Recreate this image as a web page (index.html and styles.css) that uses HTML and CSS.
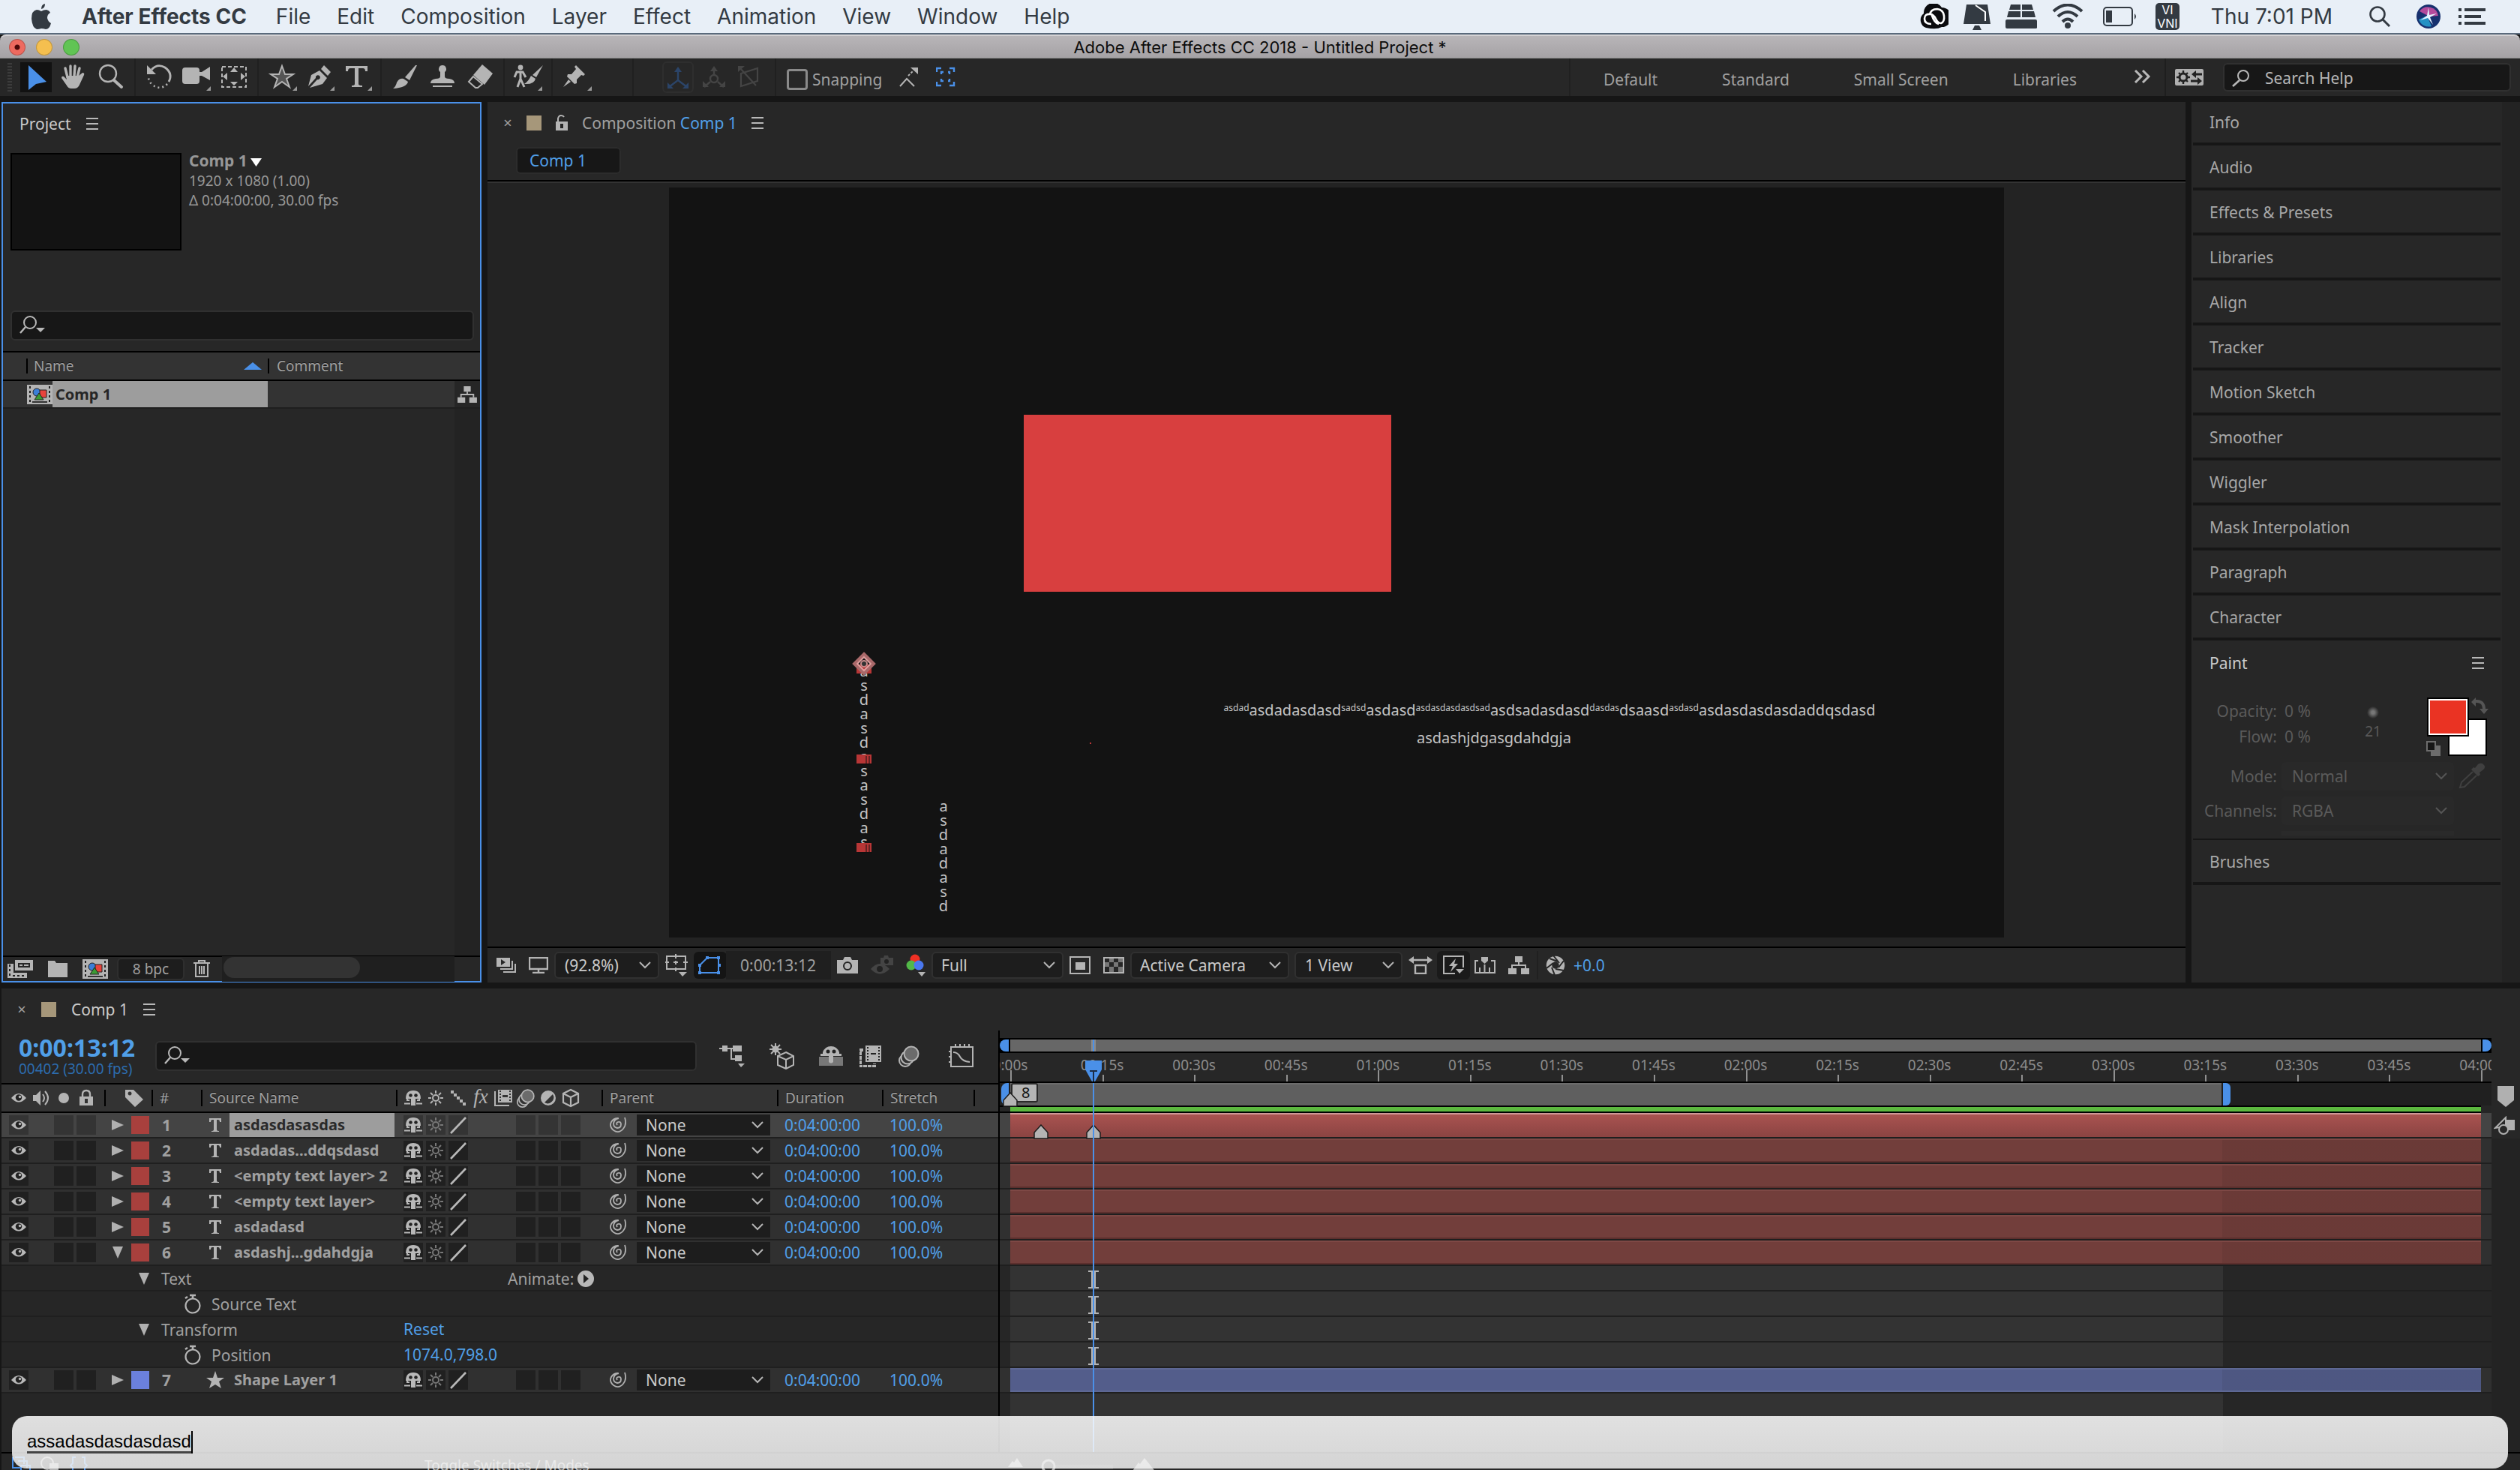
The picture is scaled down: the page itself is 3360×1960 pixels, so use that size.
FILE: index.html
```html
<!DOCTYPE html>
<html lang="en">
<head>
<meta charset="utf-8">
<title>Adobe After Effects CC 2018 - Untitled Project *</title>
<link rel="stylesheet" href="styles.css">
</head>
<body>
<svg class="sprite" aria-hidden="true">
  <!-- tools, 50 x 50 cells -->
  <symbol id="t-select" viewBox="0 0 50 50"><path d="M15 9 39 31 25 34 15 42z" fill="#4a90e8"/></symbol>
  <symbol id="t-hand" viewBox="0 0 50 50"><path d="M17 25 14 13M21 23V10M26 23 27 10M30 25 33 13" stroke="#b4b4b4" stroke-width="3.4" stroke-linecap="round"/><path d="M15 23H32L37 19Q40 19 39 22L33 35Q31 40 26 40H22Q18 40 16 36L9 26Q9 23 12 24L16 28z" fill="#b4b4b4"/></symbol>
  <symbol id="t-zoom" viewBox="0 0 50 50"><circle cx="21" cy="20" r="11" fill="none" stroke="#b4b4b4" stroke-width="2.4"/><path d="M29 29 39 38" stroke="#b4b4b4" stroke-width="4" stroke-linecap="round"/></symbol>
  <symbol id="t-rotate" viewBox="0 0 50 50"><path d="M15 15Q23 6 33 12 44 20 38 31" fill="none" stroke="#b4b4b4" stroke-width="2.8"/><path d="M9 9V21H21z" fill="#b4b4b4"/><path d="M36 34Q27 43 16 35 11 30 11 25" fill="none" stroke="#b4b4b4" stroke-width="2.6" stroke-dasharray="2 4"/></symbol>
  <symbol id="t-camera" viewBox="0 0 50 50"><path d="M10 12H25Q29 12 29 16V18H32L43 11V29L32 23H29V30Q29 34 25 34H10Q6 34 6 30V16Q6 12 10 12z" fill="#b4b4b4"/><path d="M44 37V43H38z" fill="#999"/></symbol>
  <symbol id="t-pan" viewBox="0 0 50 50"><path d="M9 11H41V38H9z" fill="none" stroke="#b4b4b4" stroke-width="2" stroke-dasharray="5 3"/><path d="M25 12 30 18H20zM25 36 20 31H30zM10 24 16 19V29zM40 24 34 19V29z" fill="#b4b4b4"/></symbol>
  <symbol id="t-star" viewBox="0 0 50 50"><path d="M25 10 29 21H40L31 27 35 38 25 31 15 38 19 27 10 21H21z" fill="#555" stroke="#b4b4b4" stroke-width="2"/><path d="M45 37V43H39z" fill="#999"/></symbol>
  <symbol id="t-pen" viewBox="0 0 50 50"><path d="M31 9 40 18 36 23 27 14zM25 16 35 26 29 34 12 39 22 28A3 3 0 1 0 20 26L10 37 14 22z" fill="#b4b4b4"/><path d="M45 37V43H39z" fill="#999"/></symbol>
  <symbol id="t-type" viewBox="0 0 50 50"><path d="M10 10H39V17H36Q36 13 33 13H27V34Q27 36 32 36V38H18V36Q22 36 22 34V13H16Q13 13 13 17H10z" fill="#b4b4b4"/><path d="M45 37V43H39z" fill="#999"/></symbol>
  <symbol id="t-brush" viewBox="0 0 50 50"><path d="M41 9 31 29 25 25 39 9zM23 27 29 31Q27 39 9 40 13 37 14 32 17 26 23 27z" fill="#b4b4b4"/></symbol>
  <symbol id="t-stamp" viewBox="0 0 50 50"><path d="M25 9A5 5 0 0 1 28 18V24Q28 27 34 27 41 28 41 33H9Q9 28 16 27 22 27 22 24V18A5 5 0 0 1 25 9zM12 36H38V38H12z" fill="#b4b4b4"/></symbol>
  <symbol id="t-eraser" viewBox="0 0 50 50"><path d="M28 8 42 20 31 35 16 22z" fill="#b4b4b4"/><path d="M16 24 28 34 22 39H19L10 31z" fill="none" stroke="#b4b4b4" stroke-width="2"/></symbol>
  <symbol id="t-roto" viewBox="0 0 50 50"><circle cx="15" cy="12" r="3.4" fill="#b4b4b4"/><path d="M15 17V27L11 38M15 27 20 38M7 25 10 18H18L22 25" fill="none" stroke="#b4b4b4" stroke-width="3"/><path d="M45 9 36 25 31 22zM29 23 35 27Q33 35 20 34 26 30 29 23z" fill="#b4b4b4"/><path d="M44 37V43H38z" fill="#999"/></symbol>
  <symbol id="t-pin" viewBox="0 0 50 50"><path d="M27 9 39 21 37 23 34 22 28 28V33L25 34 15 24 16 21 21 21 27 14 25 11zM17 28 20 31 10 38z" fill="#b4b4b4"/><path d="M48 37V43H42z" fill="#999"/></symbol>
  <symbol id="t-axis" viewBox="0 0 50 50"><path d="M25 13V29L13 38M25 29 37 38" fill="none" stroke="currentColor" stroke-width="2.4"/><path d="M25 11 30 18H20zM11 40V32L19 40zM39 40V32L31 40z" fill="currentColor"/></symbol>
  <symbol id="t-world" viewBox="0 0 50 50"><path d="M25 13V22M20 31 12 38M30 31 38 38" stroke="currentColor" stroke-width="2.4"/><circle cx="25" cy="27" r="5" fill="none" stroke="currentColor" stroke-width="2.4"/><path d="M25 10 30 17H20zM10 38V30L18 38zM40 38V30L32 38z" fill="currentColor"/></symbol>
  <symbol id="t-view" viewBox="0 0 50 50"><path d="M12 12 34 36M14 20 36 13V30L14 37z" fill="none" stroke="currentColor" stroke-width="2.2"/><path d="M10 10H19L10 18z" fill="currentColor"/></symbol>

  <!-- layer icons, 26 x 26 -->
  <symbol id="eye" viewBox="0 0 26 26"><path d="M3 13Q13 1 23 13 13 24 3 13z" fill="#b8b8b8"/><circle cx="13" cy="12.500" r="4.200" fill="#222"/><circle cx="14.500" cy="11.500" r="1.700" fill="#b8b8b8"/></symbol>
  <symbol id="audio" viewBox="0 0 26 26"><path d="M2 9H6L12 3V23L6 17H2z" fill="#b4b4b4"/><path d="M15 8Q19 13 15 18M18 4Q26 13 18 22" fill="none" stroke="#b4b4b4" stroke-width="2"/></symbol>
  <symbol id="solo" viewBox="0 0 26 26"><circle cx="13" cy="13" r="7" fill="#b4b4b4"/></symbol>
  <symbol id="lock" viewBox="0 0 26 26"><path d="M4 11H22V23H4z" fill="#b4b4b4"/><path d="M8 12V8Q8 3 13 3T18 8V12" fill="none" stroke="#b4b4b4" stroke-width="2.400"/><path d="M11 14H15V20H11z" fill="#333"/></symbol>
  <symbol id="tag" viewBox="0 0 26 26"><path d="M1 2H12L25 15 14 25 1 12zM7 4.500A2.500 2.500 0 1 0 7.100 4.500z" fill="#b4b4b4" fill-rule="evenodd"/></symbol>
  <symbol id="shy" viewBox="0 0 26 26"><path d="M3 14Q3 3 13 3T23 14H16V23H10V14z" fill="#b8b8b8"/><circle cx="9.500" cy="9.500" r="2.300" fill="#222"/><circle cx="16.500" cy="9.500" r="2.300" fill="#222"/><path d="M5 13V16H8M21 13V16H18M1 20.500H9M17 20.500H25" fill="none" stroke="#b8b8b8" stroke-width="2"/></symbol>
  <symbol id="sun" viewBox="0 0 26 26"><circle cx="13" cy="13" r="4" fill="none" stroke="currentColor" stroke-width="2"/><path d="M13 3V7M13 19V23M3 13H7M19 13H23M6 6 9 9M17 17 20 20M20 6 17 9M9 17 6 20" stroke="currentColor" stroke-width="2"/></symbol>
  <symbol id="slash" viewBox="0 0 26 26"><path d="M3 24 23 3" stroke="#b8b8b8" stroke-width="2.600"/></symbol>
  <symbol id="stairs" viewBox="0 0 26 26"><path d="M3 3H7V7H3zM7 7H11V11H7zM11 11H15V15H11zM15 15H19V19H15zM19 19H23V23H19z" fill="#b4b4b4"/></symbol>
  <symbol id="film" viewBox="0 0 26 26"><path d="M6 2H25V19H6z" fill="#b4b4b4"/><path d="M2 4V23H21" fill="none" stroke="#b4b4b4" stroke-width="2"/><path d="M9 3V18M22 3V18" stroke="#333" stroke-width="2" stroke-dasharray="2 2"/><path d="M12 10.500H19" stroke="#333" stroke-width="3"/></symbol>
  <symbol id="blur" viewBox="0 0 30 30"><circle cx="10" cy="21" r="8" fill="#333" stroke="#b4b4b4" stroke-width="2"/><circle cx="13" cy="17" r="8.500" fill="#333" stroke="#b4b4b4" stroke-width="2"/><circle cx="18" cy="12" r="9.500" fill="#6b6b6b" stroke="#b4b4b4" stroke-width="2"/></symbol>
  <symbol id="adjust" viewBox="0 0 26 26"><circle cx="13" cy="13" r="10" fill="#b4b4b4"/><path d="M19 8A8 8 0 0 1 8 19z" fill="#333"/></symbol>
  <symbol id="cube" viewBox="0 0 26 26"><path d="M13 2 23 7V19L13 24 3 19V7zM3 7 13 12 23 7M13 12V24" fill="none" stroke="#b4b4b4" stroke-width="2.200"/></symbol>
  <symbol id="closed" viewBox="0 0 16 16"><path d="M0 1 16 8 0 15z" fill="#b0b0b0"/></symbol>
  <symbol id="open" viewBox="0 0 16 16"><path d="M1 0H15L8 16z" fill="#b0b0b0"/></symbol>
  <symbol id="type" viewBox="0 0 18 20"><path d="M1 1H17V6H15Q15 3 13 3H11V16Q11 18 14 18V19H4V18Q7 18 7 16V3H5Q3 3 3 6H1z" fill="#b4b4b4"/></symbol>
  <symbol id="star" viewBox="0 0 24 24"><path d="M12 0 15 9H24L17 14 20 23 12 18 4 23 7 14 0 9H9z" fill="#b4b4b4"/></symbol>
  <symbol id="whip" viewBox="0 0 26 26"><path d="M12 13Q10 10 13 9 17 8 17 12 17 17 12 17 7 16 7 11 8 5 14 4M22 3Q25 12 20 18 14 25 7 20 1 15 4 9 7 4 13 4" fill="none" stroke="#b0b0b0" stroke-width="1.800"/></symbol>
  <symbol id="watch" viewBox="0 0 24 28"><circle cx="12" cy="16" r="9.500" fill="none" stroke="#b4b4b4" stroke-width="2.200"/><path d="M8 2H16M12 2V6M2 6 5 4" stroke="#b4b4b4" stroke-width="2.600"/></symbol>
  <symbol id="menu" viewBox="0 0 16 16"><path d="M0 1H16M0 8H16M0 15H16" stroke="#b8b8b8" stroke-width="2"/></symbol>
  <symbol id="find" viewBox="0 0 34 28"><circle cx="14" cy="10" r="8" fill="none" stroke="#b8b8b8" stroke-width="2"/><path d="M8 16 1 24" stroke="#b8b8b8" stroke-width="2.400"/><path d="M22 17H34L28 23z" fill="#b8b8b8"/></symbol>
  <symbol id="comp" viewBox="0 0 34 26"><path d="M0 0H34V26H0z" fill="#b4b4b4"/><path d="M4 2V25M30 2V25" stroke="#222" stroke-width="2" stroke-dasharray="3 3"/><path d="M7 23H27" stroke="#333" stroke-width="2"/><circle cx="13" cy="10" r="5" fill="#3b7fd8" stroke="#222"/><path d="M17 7H26V17H17z" fill="#e8443c" stroke="#222"/><path d="M16 11 22 20H10z" fill="#3c9a35" stroke="#222"/></symbol>
  <symbol id="tree" viewBox="0 0 28 26"><path d="M9 1H19V9H9zM0 17H11V25H0zM17 17H28V25H17z" fill="#b4b4b4"/><path d="M14 9V13M5 17V13H23V17" fill="none" stroke="#b4b4b4" stroke-width="2"/></symbol>
  <symbol id="marker" viewBox="0 0 20 20"><path d="M10 1 19 11V19H1V11z" fill="#b4b4b4" stroke="#1c1c1c" stroke-width="1.500"/></symbol>
  <symbol id="ibeam" viewBox="0 0 16 24"><path d="M1 1H15M1 23H15" stroke="#b4b4b4" stroke-width="2"/><path d="M8 1V23" stroke="#b4b4b4" stroke-width="6"/></symbol>
</svg>

<header class="menubar">
  <svg class="apple" viewBox="0 0 28 34"><path d="M14 10Q17 8 21 8 25 9 26 12 22 14 22 19 23 24 27 26 25 34 20 34 17 33 14 33 11 34 8 34 2 32 1 20 1 9 8 8 11 8 14 10zM14 7Q14 1 19 0 19 6 14 7z" fill="#333a42"/></svg>
  <nav class="menus">
    <button class="app">After Effects CC</button><button>File</button><button>Edit</button><button>Composition</button><button>Layer</button><button>Effect</button><button>Animation</button><button>View</button><button>Window</button><button>Help</button>
  </nav>
  <div class="status">
    <svg width="40" height="34" viewBox="0 0 40 34"><path d="M10 32A11 11 0 0 1 7 13 13 13 0 0 1 31 5 12 12 0 0 1 31 31Q24 35 10 32z" fill="#0b0b0e"/><path d="M17 27Q8 27 8 20T16 14Q20 14 23 20T30 26Q35 24 34 16T25 7Q16 7 15 15M17 13Q21 26 27 27" fill="none" stroke="#fff" stroke-width="2.600"/></svg>
    <svg width="36" height="36" viewBox="0 0 36 36"><path d="M4 2H32L36 28H0zM15 30H21L24 36H12z" fill="#333a42"/><path d="M16 3 29 12V24" fill="none" stroke="#fff" stroke-width="2"/></svg>
    <svg width="42" height="34" viewBox="0 0 42 34"><path d="M7 1H20V8H5zM22 1H35L37 8H22zM4 10H20V18H2zM22 10H38L40 18H22zM2 21H40Q42 21 42 23V32Q42 33 40 33H2Q0 33 0 31V23Q0 21 2 21z" fill="#333a42"/></svg>
    <svg width="42" height="34" viewBox="0 0 42 34"><path d="M2 10Q21-7 40 10M8 17Q21 5 34 17M14 24Q21 17 28 24" fill="none" stroke="#333a42" stroke-width="4"/><circle cx="21" cy="29" r="4" fill="#333a42"/></svg>
    <svg class="wide" width="46" height="26" viewBox="0 0 46 26"><rect x="1" y="1" width="38" height="24" rx="4" fill="none" stroke="#333a42" stroke-width="2"/><path d="M4 5H12V21H4zM42 9Q46 13 42 17z" fill="#333a42"/></svg>
    <span class="input-source">VI<br>VNI</span>
    <span class="clock">Thu 7:01 PM</span>
    <svg width="30" height="30" viewBox="0 0 30 30"><circle cx="12" cy="12" r="9.500" fill="none" stroke="#333a42" stroke-width="2.600"/><path d="M19 19 28 28" stroke="#333a42" stroke-width="3"/></svg>
    <svg class="siri" width="32" height="32" viewBox="0 0 32 32"><circle cx="16" cy="16" r="16" fill="#16306e"/><path d="M4 9A14 14 0 0 1 29 15L17 16z" fill="#b34a9c"/><path d="M3 20 14 15 20 29A14 14 0 0 1 3 20z" fill="#2391c4"/><path d="M16 4 17 14 27 12 18 17 22 27 15 18 5 21 14 15z" fill="#e4f4ff"/></svg>
    <svg width="36" height="24" viewBox="0 0 36 24"><path d="M0 3H4M8 3H36M0 12H4M8 12H30M0 21H4M8 21H36" stroke="#333a42" stroke-width="4"/></svg>
  </div>
</header>

<div class="titlebar">
  <div class="lights"><button class="close" aria-label="Close"></button><button class="min" aria-label="Minimise"></button><button class="max" aria-label="Zoom"></button></div>
  <h1>Adobe After Effects CC 2018 - Untitled Project *</h1>
</div>

<div class="toolbar">
  <span class="grip"></span>
  <div class="tools">
    <button class="on" aria-label="Selection"><svg><use href="#t-select"/></svg></button>
    <button aria-label="Hand"><svg><use href="#t-hand"/></svg></button>
    <button aria-label="Zoom"><svg><use href="#t-zoom"/></svg></button>
  </div>
  <div class="tools">
    <button aria-label="Rotation"><svg><use href="#t-rotate"/></svg></button>
    <button aria-label="Camera"><svg><use href="#t-camera"/></svg></button>
    <button aria-label="Pan behind"><svg><use href="#t-pan"/></svg></button>
  </div>
  <div class="tools">
    <button aria-label="Shape"><svg><use href="#t-star"/></svg></button>
    <button aria-label="Pen"><svg><use href="#t-pen"/></svg></button>
    <button aria-label="Type"><svg><use href="#t-type"/></svg></button>
  </div>
  <div class="tools">
    <button aria-label="Brush"><svg><use href="#t-brush"/></svg></button>
    <button aria-label="Clone stamp"><svg><use href="#t-stamp"/></svg></button>
    <button aria-label="Eraser"><svg><use href="#t-eraser"/></svg></button>
  </div>
  <div class="tools"><button aria-label="Roto brush"><svg><use href="#t-roto"/></svg></button></div>
  <div class="tools last"><button aria-label="Puppet pin"><svg><use href="#t-pin"/></svg></button></div>
  <div class="tools axes">
    <button class="on" aria-label="Local axis"><svg><use href="#t-axis"/></svg></button>
    <button aria-label="World axis"><svg><use href="#t-world"/></svg></button>
    <button aria-label="View axis"><svg><use href="#t-view"/></svg></button>
  </div>
  <label class="snapping"><input type="checkbox">Snapping</label>
  <svg class="snap" width="26" height="28" viewBox="0 0 26 28"><path d="M1 26 10 16 20 26" fill="none" stroke="#b4b4b4" stroke-width="2"/><path d="M12 12 19 5" stroke="#b4b4b4" stroke-width="2" stroke-dasharray="3 2"/><path d="M15 1H25V10z" fill="#b4b4b4"/></svg>
  <svg class="snap" width="26" height="28" viewBox="0 0 26 28"><path d="M1 7V2H7M18 2H24V7M1 20V25H7M18 25H24V20M7 10V7H10M16 7H18V10M7 16V19H10M16 19H18V16" fill="none" stroke="#4a90e8" stroke-width="2.400"/></svg>
  <div class="workspaces">
    <button>Default</button><button>Standard</button><button>Small Screen</button><button>Libraries</button>
    <svg width="22" height="18" viewBox="0 0 22 18"><path d="M1 1 9 9 1 17M11 1 19 9 11 17" fill="none" stroke="#b8b8b8" stroke-width="3"/></svg>
  </div>
  <div class="help">
    <svg width="38" height="22" viewBox="0 0 38 22"><rect width="38" height="22" rx="2" fill="#b0b0b0"/><circle cx="11" cy="11" r="5" fill="none" stroke="#222" stroke-width="3"/><path d="M11 2V6M11 16V20M2 11H6M16 11H20M5 5 7 7M15 15 17 17M17 5 15 7M7 15 5 17" stroke="#222" stroke-width="2.400"/><path d="M36 7H26M21 16H32" stroke="#222" stroke-width="3"/><path d="M28 2V12L22 7zM30 11V21L36 16z" fill="#222"/></svg>
    <label class="search"><svg width="24" height="24" viewBox="0 0 24 24"><circle cx="15" cy="9" r="7" fill="none" stroke="#b8b8b8" stroke-width="2"/><path d="M10 15 1 23" stroke="#b8b8b8" stroke-width="2.600"/></svg><input type="text" aria-label="Search Help" placeholder="Search Help"></label>
  </div>
</div>

<main class="workspace">
  <section class="panel project">
    <header class="tab"><h2>Project</h2><svg class="menu"><use href="#menu"/></svg></header>
    <div class="info">
      <div class="thumb"></div>
      <p><b>Comp 1<svg width="15" height="11" viewBox="0 0 15 11"><path d="M0 0H15L7.500 11z" fill="#fff"/></svg></b><br>1920 x 1080 (1.00)<br>Δ 0:04:00:00, 30.00 fps</p>
    </div>
    <label class="search"><svg width="34" height="28"><use href="#find"/></svg><input type="text" aria-label="Search project"></label>
    <table class="items">
      <colgroup><col class="c-item"><col><col class="c-flow"></colgroup>
      <thead><tr><th class="first"><span>Name</span><svg width="24" height="10" viewBox="0 0 24 10"><path d="M12 0 24 10H0z" fill="#4a90e8"/></svg></th><th colspan="2"><span>Comment</span></th></tr></thead>
      <tbody><tr><td><div><svg width="34" height="26"><use href="#comp"/></svg><b>Comp 1</b></div></td><td></td><td class="flow"><svg width="26" height="24"><use href="#tree"/></svg></td></tr></tbody>
    </table>
    <div class="rest"><i></i></div>
    <footer>
      <svg width="34" height="24" viewBox="0 0 34 24"><path d="M10 0H34V14H10zM14 4V10H30V4z" fill="#b4b4b4" fill-rule="evenodd"/><path d="M16 7H20M22 7H28" stroke="#b4b4b4" stroke-width="2"/><path d="M0 5H8V17H26V24H0z" fill="#b4b4b4"/><path d="M3 6V23M7 21H23" stroke="#222" stroke-width="2" stroke-dasharray="3 3"/></svg>
      <svg width="26" height="22" viewBox="0 0 26 22"><path d="M0 0H9L11 3H26V22H0z" fill="#b4b4b4"/></svg>
      <svg width="34" height="26"><use href="#comp"/></svg>
      <button class="bpc">8 bpc</button>
      <svg width="22" height="24" viewBox="0 0 22 24"><path d="M0 4H22M7 4V1H15V4M3 5V22H19V5M8 8V19M11 8V19M14 8V19" fill="none" stroke="#b4b4b4" stroke-width="2"/></svg>
      <div class="scroll"><i></i></div>
      <span class="corner"></span>
    </footer>
  </section>

  <section class="panel viewer">
    <header class="tab"><button class="x" aria-label="Close tab">×</button><i class="chip"></i><svg width="16" height="22" viewBox="0 0 16 22"><path d="M0 9H16V21H0zM6 12V18H10V12z" fill="#b4b4b4" fill-rule="evenodd"/><path d="M3 9V5Q4 1 7 1T11 3" fill="none" stroke="#b4b4b4" stroke-width="2"/></svg><h2>Composition <em>Comp 1</em></h2><svg class="menu"><use href="#menu"/></svg></header>
    <div class="crumbs"><button>Comp 1</button></div>
    <div class="stage">
      <svg viewBox="0 0 1780 1000">
        <rect width="1780" height="1000" fill="#131313"/>
        <rect x="473" y="303" width="490" height="236" fill="#d83f3f"/>
        <g class="ink" text-anchor="middle">
          <text x="260"><tspan x="260" y="652">a</tspan><tspan x="260" dy="19">s</tspan><tspan x="260" dy="19">d</tspan><tspan x="260" dy="19">a</tspan><tspan x="260" dy="19">s</tspan><tspan x="260" dy="19">d</tspan><tspan x="260" dy="19">a</tspan><tspan x="260" dy="19">s</tspan><tspan x="260" dy="19">a</tspan><tspan x="260" dy="19">s</tspan><tspan x="260" dy="19">d</tspan><tspan x="260" dy="19">a</tspan><tspan x="260" dy="19">s</tspan></text>
          <text x="366"><tspan x="366" y="832">a</tspan><tspan x="366" dy="19">s</tspan><tspan x="366" dy="19">d</tspan><tspan x="366" dy="19">a</tspan><tspan x="366" dy="19">d</tspan><tspan x="366" dy="19">a</tspan><tspan x="366" dy="19">s</tspan><tspan x="366" dy="19">d</tspan></text>
          <text x="1174" y="704"><tspan class="sup" dy="-6">asdad</tspan><tspan dy="6">asdadasdasd</tspan><tspan class="sup" dy="-6">sadsd</tspan><tspan dy="6">asdasd</tspan><tspan class="sup" dy="-6">asdasdasdasdsad</tspan><tspan dy="6">asdsadasdasd</tspan><tspan class="sup" dy="-6">dasdas</tspan><tspan dy="6">dsaasd</tspan><tspan class="sup" dy="-6">asdasd</tspan><tspan dy="6">asdasdasdasdaddqsdasd</tspan></text>
          <text x="1100" y="741">asdashjdgasgdahdgja</text>
        </g>
        <path d="M250 636H270V648H250zM250 756H270V768H250zM250 874H270V886H250z" fill="#b83636"/>
        <path d="M263 758V768M267 758V768M263 876V886M267 876V886M252 769H271M252 887H271" stroke="#111" stroke-width="1"/>
        <path d="M260 622 273 635 260 648 247 635z" fill="none" stroke="#a9696a" stroke-width="4"/>
        <path d="M260 626 269 635 260 644 251 635z" fill="none" stroke="#e0a0a0" stroke-width="2"/>
        <circle cx="260" cy="635" r="4" fill="#333" stroke="#c98a8a" stroke-width="2"/>
        <path d="M561 740H563V742H561z" fill="#b83636"/>
      </svg>
    </div>
    <footer class="controls">
      <svg width="26" height="20" viewBox="0 0 26 20"><path d="M0 0H18V12H0zM6 2V10L12 6z" fill="#b4b4b4" fill-rule="evenodd"/><path d="M21 4V15H5M25 8V19H9" fill="none" stroke="#b4b4b4" stroke-width="2"/></svg>
      <svg width="26" height="22" viewBox="0 0 26 22"><path d="M1 1H25V16H1zM5 21H21M13 16V21" fill="none" stroke="#b4b4b4" stroke-width="2.400"/></svg>
      <select class="zoom" aria-label="Magnification"><option>(92.8%)</option></select>
      <svg width="30" height="30" viewBox="0 0 30 30"><path d="M2 3H27V20H2zM14 0V6M14 18V23M0 11H5M24 11H30M14 9V14M11 11H17" fill="none" stroke="#b4b4b4" stroke-width="2"/><path d="M18 24H29L23 30z" fill="#b4b4b4"/></svg>
      <button class="mask" aria-label="Mask visibility"><svg width="30" height="24" viewBox="0 0 30 24"><path d="M2 12 12 2H27V22H2z" fill="none" stroke="#4a90e8" stroke-width="2"/><path d="M10 0H14V4H10zM25 0H29V4H25zM0 10H4V14H0zM0 20H4V24H0zM25 20H29V24H25zM26 10H30V14H26z" fill="#4a90e8"/></svg></button>
      <span class="time">0:00:13:12</span>
      <svg width="28" height="22" viewBox="0 0 28 22"><path d="M0 4H8L10 0H18L20 4H28V22H0z" fill="#b4b4b4"/><circle cx="14" cy="12" r="5" fill="none" stroke="#222" stroke-width="2"/></svg>
      <svg width="30" height="26" viewBox="0 0 30 26"><path d="M13 3H17L18 0H23L24 3H30V13H13z" fill="#444"/><circle cx="21" cy="8" r="3" fill="#222"/><path d="M0 18Q12 4 25 18 12 31 0 18z" fill="#444"/><circle cx="12" cy="18" r="4" fill="#222"/></svg>
      <svg width="26" height="30" viewBox="0 0 26 30"><circle cx="12" cy="7" r="6.500" fill="#f03024"/><circle cx="7" cy="15" r="6.500" fill="#52b848"/><circle cx="17" cy="15" r="6.500" fill="#4a78f0"/><path d="M16 24H26L21 30z" fill="#b4b4b4"/></svg>
      <select class="res" aria-label="Resolution"><option>Full</option></select>
      <svg width="28" height="24" viewBox="0 0 28 24"><path d="M1 1H27V23H1z" fill="none" stroke="#b4b4b4" stroke-width="2"/><path d="M8 8H21V18H8z" fill="#b4b4b4"/></svg>
      <svg width="28" height="22" viewBox="0 0 28 22"><path d="M1 1H27V21H1z" fill="#262626" stroke="#b4b4b4" stroke-width="2"/><path d="M8 2H14V7H8zM20 2H26V7H20zM2 7H8V13H2zM14 7H20V13H14zM8 13H14V20H8zM20 13H26V20H20z" fill="#777"/></svg>
      <select class="cam" aria-label="3D view"><option>Active Camera</option></select>
      <select class="views" aria-label="View layout"><option>1 View</option></select>
      <svg width="32" height="24" viewBox="0 0 32 24"><path d="M5 5H27M9 12H23V23H9z" fill="none" stroke="#b4b4b4" stroke-width="2.400"/><path d="M0 5 7 0V10zM32 5 25 0V10z" fill="#b4b4b4"/></svg>
      <button class="fast" aria-label="Fast previews"><svg width="28" height="26" viewBox="0 0 28 26"><path d="M16 24H1V1H27V16" fill="none" stroke="#b4b4b4" stroke-width="2"/><path d="M17 4 8 14H13L10 22 20 11H15zM17 18H28L22 24z" fill="#b4b4b4"/></svg></button>
      <svg width="28" height="22" viewBox="0 0 28 22"><path d="M5 5H1V21H27V5H22M7 21V14M13.500 21V10M20 21V14" fill="none" stroke="#b4b4b4" stroke-width="2"/><path d="M9 0H18V5L13.500 9 9 5z" fill="#b4b4b4"/></svg>
      <svg width="28" height="26"><use href="#tree"/></svg>
      <span class="bar"></span>
      <svg width="26" height="26" viewBox="0 0 26 26"><circle cx="13" cy="13" r="8.500" fill="none" stroke="#b4b4b4" stroke-width="7.500"/><path d="M10 0 18 10M24 7 17 16M24 20 13 18M12 26 8 16M1 17 10 10M5 4 16 8" stroke="#262626" stroke-width="2"/></svg>
      <button class="exposure">+0.0</button>
    </footer>
  </section>

  <aside class="panel stack">
    <div class="list">
      <button>Info</button><button>Audio</button><button>Effects &amp; Presets</button><button>Libraries</button><button>Align</button><button>Tracker</button><button>Motion Sketch</button><button>Smoother</button><button>Wiggler</button><button>Mask Interpolation</button><button>Paragraph</button><button>Character</button>
      <section class="paint">
        <header><h2>Paint</h2><svg class="menu"><use href="#menu"/></svg></header>
        <div class="brush">
          <dl><dt>Opacity:</dt><dd>0 %</dd><dt>Flow:</dt><dd>0 %</dd></dl>
          <div class="tip"><i></i>21</div>
          <svg width="84" height="80" viewBox="0 0 84 80"><rect x="31" y="29" width="50" height="48" fill="#fff" stroke="#000" stroke-width="2"/><rect x="3" y="1" width="54" height="50" fill="#fff" stroke="#000" stroke-width="2"/><rect x="6" y="4" width="48" height="44" fill="#ea3323"/><path d="M67 5Q78 4 78 16" fill="none" stroke="#555" stroke-width="4"/><path d="M61 6 67 0V12zM72 15H84L78 22z" fill="#555"/><path d="M7 64H20V78H7z" fill="#6c6c6c"/><path d="M2 59H13V71H2z" fill="#161616" stroke="#6c6c6c" stroke-width="2"/></svg>
        </div>
        <div class="field"><label for="mode">Mode:</label><select id="mode" disabled><option>Normal</option></select><svg width="36" height="36" viewBox="0 0 36 36"><path d="M26 2Q31-1 34 3T32 10L28 13 29 16 26 18 17 9 20 6 22 7z" fill="#404040"/><path d="M19 12 4 26 2 33 8 32 24 17" fill="none" stroke="#404040" stroke-width="2"/></svg></div>
        <div class="field"><label for="channels">Channels:</label><select id="channels" disabled><option>RGBA</option></select></div>
        <div class="peek"></div>
      </section>
      <button>Brushes</button>
    </div>
  </aside>
</main>

<section class="panel timeline">
  <header class="tab"><button class="x" aria-label="Close tab">×</button><i class="chip"></i><h2>Comp 1</h2><svg class="menu"><use href="#menu"/></svg></header>
  <div class="split">
    <div class="layers">
      <div class="head">
        <div class="code"><b>0:00:13:12</b><span>00402 (30.00 fps)</span></div>
        <label class="search"><svg width="34" height="28"><use href="#find"/></svg><input type="text" aria-label="Search layers"></label>
        <svg width="34" height="32" viewBox="0 0 34 32"><path d="M0 6H20M16 6V20H26" fill="none" stroke="#b4b4b4" stroke-width="2"/><path d="M4 2H11V10H4zM18 2H30V10H18zM21 15H30V23H21zM25 26H34L29 31z" fill="#b4b4b4"/></svg>
        <svg width="34" height="36" viewBox="0 0 34 36"><path d="M9 1V17M1 9H17M3 3 15 15M15 3 3 15" stroke="#b4b4b4" stroke-width="2"/><circle cx="9" cy="9" r="4.500" fill="#b4b4b4"/><path d="M23 13 33 18V30L23 35 12 30V18zM12 18 23 23 33 18M23 23V35" fill="#272727" stroke="#b4b4b4" stroke-width="2"/></svg>
        <svg width="34" height="28" viewBox="0 0 34 28"><path d="M1 15H33V27H1z" fill="#777"/><path d="M3 11H6V9Q9 1 17 1T28 9V11H31V14H20V22Q17 25 14 22V14H3z" fill="#b4b4b4"/><circle cx="13" cy="8" r="2.500" fill="#222"/><circle cx="21" cy="8" r="2.500" fill="#222"/></svg>
        <svg class="near" width="30" height="30" viewBox="0 0 30 30"><path d="M8 1H29V23H8z" fill="#b4b4b4"/><path d="M11 3V22M26 3V22" stroke="#222" stroke-width="2" stroke-dasharray="2 2"/><path d="M15 12H22" stroke="#222" stroke-width="2"/><path d="M5 7H1V29H20V25" fill="none" stroke="#b4b4b4" stroke-width="4" stroke-dasharray="5 1"/></svg>
        <svg class="near" width="30" height="30"><use href="#blur"/></svg>
        <svg class="graph" width="34" height="32" viewBox="0 0 34 32"><path d="M3 4H32V30H3zM6 11Q12 11 15 17T28 24" fill="none" stroke="#b4b4b4" stroke-width="2"/><path d="M9 0V4M15 0V4M21 0V4M27 0V4M0 10H3M0 17H3M0 24H3" stroke="#b4b4b4" stroke-width="2"/></svg>
      </div>
      <table class="outline">
        <colgroup><col class="c-av"><col class="c-label"><col class="c-num"><col class="c-name"><col class="c-sw"><col class="c-parent"><col class="c-dur"><col class="c-str"><col></colgroup>
        <thead><tr>
          <th><div class="av"><svg><use href="#eye"/></svg><svg><use href="#audio"/></svg><svg><use href="#solo"/></svg><svg><use href="#lock"/></svg></div></th>
          <th><div class="lab"><svg class="tag"><use href="#tag"/></svg></div></th>
          <th><span>#</span></th><th><span>Source Name</span></th>
          <th><div class="sw"><svg><use href="#shy"/></svg><svg class="lit"><use href="#sun"/></svg><svg><use href="#stairs"/></svg><i class="fx">fx</i><svg><use href="#film"/></svg><svg><use href="#blur"/></svg><svg><use href="#adjust"/></svg><svg><use href="#cube"/></svg></div></th>
          <th><span>Parent</span></th><th><span>Duration</span></th><th><span>Stretch</span></th><th></th>
        </tr></thead>
        <tbody>
          <tr class="layer sel"><td><div class="av"><button aria-label="Video"><svg><use href="#eye"/></svg></button><i></i><button aria-label="Solo"></button><button aria-label="Lock"></button></div></td><td><div class="lab"><svg><use href="#closed"/></svg><i class="red"></i></div></td><td class="num">1</td><td><div class="nm"><svg><use href="#type"/></svg><b>asdasdasasdas</b></div></td><td><div class="sw"><button aria-label="Shy"><svg><use href="#shy"/></svg></button><button aria-label="Collapse"><svg><use href="#sun"/></svg></button><button aria-label="Quality"><svg><use href="#slash"/></svg></button><i></i><i></i><button aria-label="Motion blur"></button><button aria-label="Adjustment"></button><button aria-label="3D"></button></div></td><td><div class="pa"><svg><use href="#whip"/></svg><select aria-label="Parent of layer 1"><option>None</option></select></div></td><td class="val">0:04:00:00</td><td class="val">100.0%</td><td></td></tr>
          <tr class="layer"><td><div class="av"><button aria-label="Video"><svg><use href="#eye"/></svg></button><i></i><button aria-label="Solo"></button><button aria-label="Lock"></button></div></td><td><div class="lab"><svg><use href="#closed"/></svg><i class="red"></i></div></td><td class="num">2</td><td><div class="nm"><svg><use href="#type"/></svg><b>asdadas...ddqsdasd</b></div></td><td><div class="sw"><button aria-label="Shy"><svg><use href="#shy"/></svg></button><button aria-label="Collapse"><svg><use href="#sun"/></svg></button><button aria-label="Quality"><svg><use href="#slash"/></svg></button><i></i><i></i><button aria-label="Motion blur"></button><button aria-label="Adjustment"></button><button aria-label="3D"></button></div></td><td><div class="pa"><svg><use href="#whip"/></svg><select aria-label="Parent of layer 2"><option>None</option></select></div></td><td class="val">0:04:00:00</td><td class="val">100.0%</td><td></td></tr>
          <tr class="layer"><td><div class="av"><button aria-label="Video"><svg><use href="#eye"/></svg></button><i></i><button aria-label="Solo"></button><button aria-label="Lock"></button></div></td><td><div class="lab"><svg><use href="#closed"/></svg><i class="red"></i></div></td><td class="num">3</td><td><div class="nm"><svg><use href="#type"/></svg><b>&lt;empty text layer&gt; 2</b></div></td><td><div class="sw"><button aria-label="Shy"><svg><use href="#shy"/></svg></button><button aria-label="Collapse"><svg><use href="#sun"/></svg></button><button aria-label="Quality"><svg><use href="#slash"/></svg></button><i></i><i></i><button aria-label="Motion blur"></button><button aria-label="Adjustment"></button><button aria-label="3D"></button></div></td><td><div class="pa"><svg><use href="#whip"/></svg><select aria-label="Parent of layer 3"><option>None</option></select></div></td><td class="val">0:04:00:00</td><td class="val">100.0%</td><td></td></tr>
          <tr class="layer"><td><div class="av"><button aria-label="Video"><svg><use href="#eye"/></svg></button><i></i><button aria-label="Solo"></button><button aria-label="Lock"></button></div></td><td><div class="lab"><svg><use href="#closed"/></svg><i class="red"></i></div></td><td class="num">4</td><td><div class="nm"><svg><use href="#type"/></svg><b>&lt;empty text layer&gt;</b></div></td><td><div class="sw"><button aria-label="Shy"><svg><use href="#shy"/></svg></button><button aria-label="Collapse"><svg><use href="#sun"/></svg></button><button aria-label="Quality"><svg><use href="#slash"/></svg></button><i></i><i></i><button aria-label="Motion blur"></button><button aria-label="Adjustment"></button><button aria-label="3D"></button></div></td><td><div class="pa"><svg><use href="#whip"/></svg><select aria-label="Parent of layer 4"><option>None</option></select></div></td><td class="val">0:04:00:00</td><td class="val">100.0%</td><td></td></tr>
          <tr class="layer"><td><div class="av"><button aria-label="Video"><svg><use href="#eye"/></svg></button><i></i><button aria-label="Solo"></button><button aria-label="Lock"></button></div></td><td><div class="lab"><svg><use href="#closed"/></svg><i class="red"></i></div></td><td class="num">5</td><td><div class="nm"><svg><use href="#type"/></svg><b>asdadasd</b></div></td><td><div class="sw"><button aria-label="Shy"><svg><use href="#shy"/></svg></button><button aria-label="Collapse"><svg><use href="#sun"/></svg></button><button aria-label="Quality"><svg><use href="#slash"/></svg></button><i></i><i></i><button aria-label="Motion blur"></button><button aria-label="Adjustment"></button><button aria-label="3D"></button></div></td><td><div class="pa"><svg><use href="#whip"/></svg><select aria-label="Parent of layer 5"><option>None</option></select></div></td><td class="val">0:04:00:00</td><td class="val">100.0%</td><td></td></tr>
          <tr class="layer"><td><div class="av"><button aria-label="Video"><svg><use href="#eye"/></svg></button><i></i><button aria-label="Solo"></button><button aria-label="Lock"></button></div></td><td><div class="lab"><svg><use href="#open"/></svg><i class="red"></i></div></td><td class="num">6</td><td><div class="nm"><svg><use href="#type"/></svg><b>asdashj...gdahdgja</b></div></td><td><div class="sw"><button aria-label="Shy"><svg><use href="#shy"/></svg></button><button aria-label="Collapse"><svg><use href="#sun"/></svg></button><button aria-label="Quality"><svg><use href="#slash"/></svg></button><i></i><i></i><button aria-label="Motion blur"></button><button aria-label="Adjustment"></button><button aria-label="3D"></button></div></td><td><div class="pa"><svg><use href="#whip"/></svg><select aria-label="Parent of layer 6"><option>None</option></select></div></td><td class="val">0:04:00:00</td><td class="val">100.0%</td><td></td></tr>
          <tr><td></td><td colspan="3"><div class="group"><svg><use href="#open"/></svg>Text</div></td><td colspan="5"><div class="animate">Animate:<svg width="22" height="22" viewBox="0 0 22 22"><circle cx="11" cy="11" r="11" fill="#b8b8b8"/><path d="M8 5 15 11 8 17z" fill="#222"/></svg></div></td></tr>
          <tr><td></td><td colspan="3"><div class="prop"><svg><use href="#watch"/></svg>Source Text</div></td><td colspan="5"></td></tr>
          <tr><td></td><td colspan="3"><div class="group"><svg><use href="#open"/></svg>Transform</div></td><td colspan="5" class="val">Reset</td></tr>
          <tr><td></td><td colspan="3"><div class="prop"><svg><use href="#watch"/></svg>Position</div></td><td colspan="5" class="val">1074.0,798.0</td></tr>
          <tr class="layer"><td><div class="av"><button aria-label="Video"><svg><use href="#eye"/></svg></button><i></i><button aria-label="Solo"></button><button aria-label="Lock"></button></div></td><td><div class="lab"><svg><use href="#closed"/></svg><i class="blue"></i></div></td><td class="num">7</td><td><div class="nm"><svg class="wide"><use href="#star"/></svg><b>Shape Layer 1</b></div></td><td><div class="sw"><button aria-label="Shy"><svg><use href="#shy"/></svg></button><button aria-label="Collapse"><svg><use href="#sun"/></svg></button><button aria-label="Quality"><svg><use href="#slash"/></svg></button><i></i><i></i><button aria-label="Motion blur"></button><button aria-label="Adjustment"></button><button aria-label="3D"></button></div></td><td><div class="pa"><svg><use href="#whip"/></svg><select aria-label="Parent of layer 7"><option>None</option></select></div></td><td class="val">0:04:00:00</td><td class="val">100.0%</td><td></td></tr>
        </tbody>
      </table>
      <div class="void"></div>
    </div>

    <div class="tracks">
      <div class="nav"><i></i><span></span><i></i></div>
      <div class="ruler"><div class="marks">
        <span class="big">0:00s</span><span>00:15s</span><span>00:30s</span><span>00:45s</span><span class="big">01:00s</span><span>01:15s</span><span>01:30s</span><span>01:45s</span><span class="big">02:00s</span><span>02:15s</span><span>02:30s</span><span>02:45s</span><span class="big">03:00s</span><span>03:15s</span><span>03:30s</span><span>03:45s</span><span class="big">04:00s</span>
      </div></div>
      <div class="work"><i class="lead"></i><span class="area"></span><i class="trail"></i></div>
      <div class="cached"></div>
      <div class="rows">
        <div class="row sel"><i class="hot"></i></div>
        <div class="row lay"><i></i></div><div class="row lay"><i></i></div><div class="row lay"><i></i></div><div class="row lay"><i></i></div><div class="row lay"><i></i></div>
        <div class="row"></div><div class="row"></div><div class="row"></div><div class="row"></div>
        <div class="row lay"><i class="cool"></i></div>
      </div>
      <!-- everything placed by time lies over the rows -->
      <div class="overlay">
        <span class="comp-marker">8</span>
        <svg class="mk zero"><use href="#marker"/></svg>
        <svg class="mk one"><use href="#marker"/></svg>
        <svg class="mk two"><use href="#marker"/></svg>
        <div class="beams"><svg><use href="#ibeam"/></svg><svg><use href="#ibeam"/></svg><svg><use href="#ibeam"/></svg><svg><use href="#ibeam"/></svg></div>
        <svg class="playhead" viewBox="0 0 22 28"><path d="M0 0H22V12L13 28H9L0 12z" fill="#4a90e8"/><path d="M6 14H16M11 14V28" stroke="#1c2c44" stroke-width="2"/></svg>
        <span class="needle"></span>
        <span class="needle short"></span>
      </div>
    </div>

    <div class="side">
      <svg width="22" height="28" viewBox="0 0 22 28"><path d="M0 0H22V19L11 28 0 19z" fill="#b0b0b0"/></svg>
      <svg width="28" height="26" viewBox="0 0 28 26"><path d="M12 5H28V19H12z" fill="#b0b0b0"/><path d="M16 2V14L2 16z" fill="#272727" stroke="#b0b0b0" stroke-width="2"/><circle cx="13" cy="18" r="6" fill="#272727" stroke="#b0b0b0" stroke-width="2"/></svg>
    </div>
  </div>
  <footer class="foot">
    <svg width="26" height="24" viewBox="0 0 26 24"><path d="M4 1H16V10M8 6H20V15M1 1V15H12M12 12H24V23H12z" fill="none" stroke="#4a90e8" stroke-width="2"/></svg>
    <svg width="26" height="24" viewBox="0 0 26 24"><circle cx="9" cy="9" r="8" fill="none" stroke="#b4b4b4" stroke-width="2"/><path d="M12 9H24V23H12z" fill="#b4b4b4"/></svg>
    <svg width="26" height="24" viewBox="0 0 26 24"><path d="M9 1H5V9L2 12 5 15V23H9M17 1H21V9L24 12 21 15V23H17" fill="none" stroke="#4a90e8" stroke-width="2"/></svg>
    <button>Toggle Switches / Modes</button>
    <div class="scale"><svg width="20" height="12" viewBox="0 0 20 12"><path d="M0 12 6 4 8 6 12 0 20 12z" fill="#b4b4b4"/></svg><svg width="96" height="22" viewBox="0 0 96 22"><path d="M18 9H96V15H18z" fill="#444"/><circle cx="10" cy="11" r="8" fill="none" stroke="#b4b4b4" stroke-width="3"/></svg><svg width="34" height="20" viewBox="0 0 34 20"><path d="M0 20 10 6 12 8 18 0 34 20z" fill="#b4b4b4"/></svg></div>
  </footer>
</section>

<div class="ime"><input type="text" aria-label="Text being composed" value="assadasdasdasdasd"><i></i></div>
</body>
</html>
```
FILE: styles.css
```css
* { box-sizing: border-box; margin: 0; }

:root {
  --panel: #272727;
  --gap: #161616;
  --well: #171717;
  --text: #a0a0a0;
  --bright: #cacaca;
  --blue: #4a90e8;
  --link: #509fe8;
}

body {
  display: flex;
  flex-direction: column;
  height: 100vh;
  background: var(--gap);
  color: var(--text);
  font: 21px/26px "Noto Sans", sans-serif;
  overflow: hidden;
}

svg { display: block; flex: none; }
.sprite { position: absolute; width: 0; height: 0; }
button, input, select { font: inherit; color: inherit; border: 0; background: none; padding: 0; border-radius: 0; }
h1, h2 { font: inherit; }
em { font-style: normal; color: var(--link); }

select {
  appearance: none;
  opacity: 1;
  color: var(--bright);
  background: #1d1d1d url("data:image/svg+xml,%3Csvg xmlns='http://www.w3.org/2000/svg' width='16' height='10'%3E%3Cpath d='M1 1 8 8 15 1' fill='none' stroke='%23b4b4b4' stroke-width='2'/%3E%3C/svg%3E") no-repeat right 9px center;
}

/* system menu bar */
.menubar {
  display: flex;
  align-items: center;
  flex: none;
  height: 46px;
  padding: 0 46px 0 41px;
  background: #e8eff7;
  border-bottom: 2px solid #5a6a7c;
  color: #333a42;
  font: 28px/42px Inter, sans-serif;
}
.apple { width: 28px; height: 34px; margin-right: 40px; }
.menus { display: flex; gap: 35px; }
.menus .app { font-weight: 700; margin-right: 4px; }
.status { display: flex; align-items: center; gap: 20px; margin-left: auto; }
.status .wide { margin: 0 4px 0 6px; }
.input-source { width: 32px; height: 36px; border-radius: 5px; background: #333a42; color: #fff; font: 16px/18px Inter, sans-serif; text-align: center; }
.clock { margin: 0 28px 0 22px; }
.siri { margin: 0 4px 0 14px; }

.titlebar {
  display: flex;
  align-items: center;
  flex: none;
  height: 32px;
  padding: 0 12px;
  background: linear-gradient(#b8b5b8, #a5a2a5);
  border-top: 2px solid #d4d2d4;
  border-bottom: 1px solid #888;
  border-radius: 8px 8px 0 0;
  color: #0c0c0c;
  font: 22px/28px Inter, sans-serif;
}
.lights { display: flex; gap: 14px; }
.lights button { width: 22px; height: 22px; border-radius: 50%; border: 1px solid #0003; }
.lights .close { background: radial-gradient(#4c0808 3px, #ee6a5f 4px); }
.lights .min { background: #f5bf4f; }
.lights .max { background: #61c454; }
.titlebar h1 { flex: 1; text-align: center; padding-right: 94px; }

/* tool bar */
.toolbar { display: flex; align-items: center; flex: none; height: 50px; background: var(--panel); padding-right: 12px; }
.grip { width: 6px; height: 38px; margin: 0 7px 0 10px; background: repeating-linear-gradient(#3c3c3c 0 2px, transparent 2px 4px); }
.tools { display: flex; border-right: 2px solid #202020; padding-right: 6px; margin-right: 6px; }
.tools button, .tools svg { width: 50px; height: 50px; }
.tools .on { background: linear-gradient(#121212, #121212) center/42px 40px no-repeat; }
.tools.last { margin-left: -2px; padding-right: 52px; margin-right: 38px; }
.axes { color: #444; padding-right: 12px; margin-right: 14px; }
.axes button { width: 47px; }
.axes .on { color: #2b4468; background: none; border: 2px solid #2e2e2e; border-radius: 6px; height: 42px; width: 42px; margin: 4px 2px 0 0; }
.axes .on svg { margin: -6px; }
.snapping { display: flex; align-items: center; gap: 6px; padding-top: 5px; }
.snapping input { appearance: none; width: 28px; height: 28px; border: 3px solid #8a8a8a; border-radius: 4px; }
.snap { margin-left: 23px; }
.workspaces { display: flex; align-items: center; gap: 86px; margin-left: auto; height: 50px; padding-left: 44px; border-left: 2px solid #202020; padding-top: 5px; }
.workspaces svg { margin: -8px 18px 0 -9px; }
.help { display: flex; align-items: center; gap: 26px; height: 50px; border-left: 2px solid #1e1e1e; padding-left: 12px; }
.search { display: flex; align-items: center; gap: 20px; height: 38px; padding: 0 10px; background: var(--well); border: 2px solid #303030; border-radius: 6px; }
.search input { flex: 1; min-width: 0; color: #b8b8b8; outline: 0; }
.search input::placeholder { color: #b8b8b8; opacity: 1; }
.help .search { width: 384px; padding-top: 2px; }

/* work space */
.workspace { flex: 1; display: grid; grid-template: minmax(0, 1fr) / 640px minmax(0, 1fr) 438px; gap: 8px; padding: 8px 0 8px 2px; min-height: 0; }
.panel { display: flex; flex-direction: column; min-width: 0; background: var(--panel); }
.tab { display: flex; align-items: center; height: 56px; flex: none; }
.tab h2 { color: var(--text); }
.menu { width: 16px; height: 16px; }
.x { width: 12px; font-size: 20px; }
.chip { width: 20px; height: 20px; background: #a6977a; }

.project { border: 2px solid var(--blue); }
.project .tab { height: 54px; padding-left: 22px; gap: 20px; }
.project h2, .timeline h2 { color: var(--bright); }
.info { display: flex; gap: 10px; height: 224px; padding: 12px 10px; }
.thumb { width: 228px; height: 130px; background: #131313; border: 2px solid #000; }
.info p { font-size: 19px; line-height: 26px; margin-top: -3px; color: #979797; }
.info b { font-size: 21px; }
.info b svg { display: inline-block; margin-left: 4px; }
.project > .search { height: 40px; margin: -2px 8px 14px 10px; }
.items { width: 100%; border-spacing: 0; table-layout: fixed; font-size: 20px; }
.c-item { width: 353px; }
.c-flow { width: 34px; }
.items th { height: 40px; padding: 0 8px 0 10px; text-align: left; font-size: 19px; font-weight: 400; background: #333; border-top: 2px solid #000; border-bottom: 2px solid #000; }
.items th.first { padding-left: 41px; background: linear-gradient(#000, #000) 31px center/2px 20px no-repeat #333; }
.items th svg { float: right; margin-top: 8px; }
.items th span, .outline th span { text-shadow: 0 -1px #151515; }
.items th + th { padding-left: 12px; background: linear-gradient(#000, #000) left center/2px 20px no-repeat #333; }
.items td { height: 37px; padding: 0; background: #333; border-bottom: 2px solid #1f1f1f; }
.items td div { display: flex; align-items: center; padding-left: 32px; }
.items td b { flex: 1; height: 35px; line-height: 35px; padding-left: 4px; background: #9d9d9d; color: #262626; }
.items .flow { padding-left: 4px; background: #262626; }
.rest { flex: 1; display: flex; justify-content: flex-end; }
.rest i { width: 34px; background: #232323; }
.project footer { display: flex; align-items: center; gap: 20px; height: 34px; padding-left: 6px; border-top: 2px solid #000; }
.bpc { width: 90px; height: 30px; margin: 0 -8px; background: #1d1d1d; border: 2px solid #2e2e2e; border-radius: 6px; font-size: 19px; line-height: 26px; }
.scroll { flex: 1; height: 34px; margin-left: -4px; padding: 1px 2px; background: #1f1f1f; }
.scroll i { display: block; width: 182px; height: 28px; border-radius: 14px; background: #333; }
.corner { width: 14px; }

.viewer .tab { padding-left: 21px; gap: 19px; }
.crumbs { flex: none; height: 50px; padding: 4px 38px 0; border-bottom: 2px solid #000; }
.crumbs button { width: 140px; height: 36px; padding-left: 16px; text-align: left; color: var(--link); background: var(--well); border: 2px solid #2c2c2c; border-radius: 6px; }
.stage { flex: 1; min-height: 0; display: flex; padding: 6px 0 12px; border-top: 2px solid #333; background: #232323; }
.stage svg { flex: 1; min-width: 0; height: 100%; }
.ink { font: 20px "Noto Sans", sans-serif; fill: #c4c4c4; }
.sup { font-size: 12px; }
.controls { display: flex; align-items: center; flex: none; gap: 17px; height: 48px; padding: 0 12px; border-top: 2px solid #000; }
.controls select { height: 36px; padding-left: 12px; margin: 0 -9px; border: 2px solid #303030; border-radius: 6px; }
.controls .zoom { width: 140px; }
.controls .mask { width: 44px; height: 36px; margin: 0 -9px; padding-left: 6px; background: #141414; border-radius: 6px; }
.time { width: 140px; margin: 0 -9px; padding-left: 19px; line-height: 38px; background: #1f1f1f; }
.controls .res { width: 176px; padding-left: 11px; }
.controls .cam { width: 212px; margin-right: -1px; padding-left: 11px; }
.controls .views { width: 144px; }
.controls .fast { width: 44px; height: 38px; margin: 0 -11px; padding-left: 8px; background: #1a1a1a; border-radius: 6px; }
.bar { width: 2px; height: 38px; margin: 0 -7px; background: #202020; }
.exposure { color: var(--link); margin-left: -6px; }

.stack { padding: 0 26px 0 2px; background: linear-gradient(to left, #232323 24px, var(--panel) 24px); }
.list { display: flex; flex-direction: column; }
.list > button { height: 60px; padding: 2px 0 0 22px; text-align: left; color: #a8a8a8; border-bottom: 4px solid var(--gap); }
.list > button:first-child { height: 58px; padding-top: 0; }
.paint { height: 266px; overflow: hidden; border-bottom: 2px solid var(--gap); color: #5a5a5a; }
.paint header { display: flex; align-items: center; justify-content: space-between; height: 60px; padding: 0 22px; color: var(--bright); }
.brush { display: flex; height: 98px; padding: 16px 16px 0 0; }
.brush dl { display: grid; grid-template-columns: 112px 60px; column-gap: 10px; grid-auto-rows: 34px; line-height: 34px; margin-top: 1px; }
.brush dt, .field label { text-align: right; }
.brush dd { margin: 0; }
.tip { width: 60px; margin: 8px auto 0 28px; text-align: center; font-size: 19px; }
.tip i { display: block; height: 24px; background: radial-gradient(circle, #777 2px, transparent 8px); }
.field { display: flex; align-items: center; height: 46px; gap: 6px; }
.field label { width: 112px; }
.field select { width: 230px; height: 38px; padding-left: 14px; background-color: #292929; color: #5a5a5a; border-radius: 6px; }
.field select:disabled { background-image: url("data:image/svg+xml,%3Csvg xmlns='http://www.w3.org/2000/svg' width='16' height='10'%3E%3Cpath d='M1 1 8 8 15 1' fill='none' stroke='%23555' stroke-width='2'/%3E%3C/svg%3E"); }
.peek { width: 230px; height: 6px; margin: 4px 0 0 118px; background: #2a2a2a; }

/* timeline */
.timeline { flex: none; margin-left: 2px; }
.timeline .tab { padding-left: 21px; gap: 20px; }
.split { flex: 1; display: grid; grid-template-columns: 1329px minmax(0, 1fr) 38px; }
.layers { min-width: 0; background: #262626; }
.head { display: flex; align-items: center; height: 70px; padding: 0 32px 2px 23px; background: var(--panel); }
.head .code { width: 182px; line-height: 22px; display: flex; flex-direction: column; color: #2c6cae; font-size: 19px; }
.code b { font-size: 32px; line-height: 34px; color: var(--link); }
.head .search { flex: 1; height: 40px; }
.head > svg { margin-left: 32px; }
.head > svg:nth-of-type(1) { margin-left: 30px; }
.head > .near { margin-left: 21px; }
.head > .graph { margin-left: 38px; }
.outline { width: 100%; border-spacing: 0; table-layout: fixed; font-size: 21px; }
.c-av { width: 137px; } .c-label { width: 63px; } .c-num { width: 66px; } .c-name { width: 260px; }
.c-sw { width: 274px; } .c-parent { width: 234px; } .c-dur { width: 140px; } .c-str { width: 122px; }
.outline th { height: 40px; padding: 0 0 0 11px; text-align: left; font-size: 19px; font-weight: 400; border-top: 2px solid #000; border-bottom: 2px solid #000; background: linear-gradient(#000, #000) left center/2px 22px no-repeat #333; }
.outline th:first-child { padding-left: 0; background: #333; }
.outline th:nth-child(2), .outline th:nth-child(5) { padding-left: 0; }
.outline td { height: 34px; padding: 0; line-height: 30px; border-bottom: 2px solid #1f1f1f; }
.layer td { background: #303030; }
.layer.sel td { background: #444; }
.av, .sw { display: flex; gap: 4px; padding-left: 10px; }
.av svg, .av button, .av i, .sw svg, .sw button, .sw i { width: 26px; height: 26px; display: block; }
.av button, .sw button { background: #202020; }
.sel .av button, .sel .sw button { background: #343434; }
.sw { color: #777; }
.sw .lit { color: #b4b4b4; }
.sw .fx { font: italic 27px/22px "Liberation Serif", serif; color: #b4b4b4; text-align: center; }
.lab { display: flex; gap: 10px; padding-left: 10px; align-items: center; }
.lab svg { width: 16px; height: 16px; }
.lab .tag { width: 26px; height: 26px; margin-left: 17px; }
.lab i { width: 24px; height: 24px; }
.red { background: #a8403d; }
.blue { background: #6b80dc; }
.outline .num { padding-left: 14px; font-weight: 700; }
.nm { display: flex; align-items: center; padding-left: 10px; }
.nm svg { width: 18px; height: 20px; margin-right: 10px; }
.nm .wide { width: 24px; height: 24px; margin: 0 7px 0 -3px; }
.nm b { flex: 1; padding-left: 6px; white-space: nowrap; line-height: 32px; font-size: 20px; }
.sel .nm b { background: #9d9d9d; color: #2a2a2a; margin-right: 2px; }
.pa { display: flex; align-items: center; gap: 12px; padding-left: 9px; }
.pa svg { width: 26px; height: 26px; }
.pa select { width: 178px; height: 28px; padding-left: 12px; line-height: 28px; }
.outline .val { padding-left: 10px; color: var(--link); }
.group, .prop { display: flex; align-items: center; gap: 15px; padding: 2px 0 0 45px; }
.group svg { width: 16px; height: 16px; }
.prop { padding-left: 106px; gap: 13px; }
.prop svg { width: 24px; height: 28px; }
.animate { display: flex; align-items: center; gap: 5px; padding: 2px 0 0 149px; }
.void { height: 78px; }

.tracks { position: relative; display: flex; flex-direction: column; padding-top: 10px; border-left: 2px solid #000; overflow: hidden; background: linear-gradient(var(--panel), var(--panel)) top/100% 10px no-repeat, #262626; }
.nav { display: flex; height: 20px; border: 2px solid #000; border-width: 2px 0; background: #000; }
.nav span { flex: 1; margin: 0 2px; background: #676767; }
.nav i { width: 12px; background: var(--blue); border-radius: 10px 0 0 10px; }
.nav i:last-child { border-radius: 0 10px 10px 0; }
.ruler { height: 40px; padding: 0 14px; border-bottom: 2px solid #000; overflow: hidden; background: var(--panel); }
.marks { display: flex; height: 38px; margin: 0 -3.125%; font-size: 19px; line-height: 32px; color: #8c8c8c; }
.marks span { position: relative; flex: 1; text-align: center; }
.marks span::after { content: ""; position: absolute; left: 50%; bottom: 0; width: 2px; height: 9px; background: #909090; }
.marks .big::after { height: 15px; }
.work { display: flex; height: 30px; background: #202020; }
.work i { width: 10px; margin: 0 2px; background: var(--blue); border-radius: 8px 0 0 8px; }
.work .trail { border-radius: 0 6px 6px 0; }
.work .area { width: 81.2%; background: #5f5f5f; border-top: 2px solid #6c6c6c; }
.cached { height: 10px; margin-right: 14px; border: 2px solid #000; border-width: 2px 0; background: linear-gradient(to right, #262626 14px, #5cb83f 14px); }
.rows { flex: 1; background: linear-gradient(to right, transparent 14px, #333 14px) left/82% 100% no-repeat; }
.row { height: 34px; padding: 0 14px; border-bottom: 2px solid #1f1f1f; }
.row i { display: block; height: 32px; background: linear-gradient(to right, transparent 82.4%, #0001 82.4%), #723e3b; border-top: 2px solid #7e4845; border-bottom: 2px solid #5c2f2d; }
.row .hot { background: linear-gradient(#a95350, #8b4442); border-color: #cf9896 #000; border-bottom: 0; }
.row .cool { background: linear-gradient(to right, transparent 82.4%, #0001 82.4%), #535d8b; border-color: #5e6894 #434c78; }
.row.lay { background: #303030; }
.row.sel { background: #444; }
.overlay { position: absolute; inset: 0 14px; }
.overlay > * { position: absolute; }
.comp-marker { left: 1px; top: 70px; width: 36px; height: 26px; padding-left: 12px; background: #b4b4b4; border: 2px solid #2a2a2a; border-radius: 3px; color: #111; font-size: 20px; line-height: 22px; }
.mk { width: 20px; height: 20px; margin-left: -10px; }
.zero { left: 0; top: 82px; }
.one { left: 2.09%; top: 125px; }
.two { left: 5.66%; top: 125px; }
.beams { left: 5.66%; top: 320px; margin-left: -8px; }
.beams svg { width: 16px; height: 24px; margin-bottom: 10px; }
.playhead { left: 5.66%; top: 40px; width: 22px; height: 28px; margin-left: -11px; }
.needle { left: 5.66%; top: 70px; bottom: 0; width: 2px; margin-left: -1px; background: var(--blue); }
.needle.short { top: 12px; bottom: auto; height: 16px; box-shadow: 0 0 0 2px #8a8a8a; clip-path: inset(0 -2px); }
.side { padding: 74px 0 0 8px; background: linear-gradient(#272727 144px, #232323 144px); }
.side svg + svg { margin: 12px 0 0 -5px; }
.foot { display: flex; gap: 12px; height: 24px; padding: 4px 0 0 14px; border-top: 2px solid #000; font-size: 19px; line-height: 24px; overflow: hidden; }
.foot button { width: 204px; height: 24px; margin-left: 436px; text-align: left; white-space: nowrap; color: #bbb; }
.scale { display: flex; gap: 24px; margin-left: 562px; padding-top: 2px; }

/* floating text entry of the input method */
.ime { position: absolute; left: 16px; right: 16px; bottom: 2px; display: flex; align-items: center; height: 70px; padding: 0 20px; border-radius: 20px; background: linear-gradient(#ffffffd9, #f2f2f2d9); }
.ime input { width: 219px; height: 30px; color: #000; border-bottom: 3px solid #444; font: 24px/24px "Liberation Sans", sans-serif; }
.ime i { width: 2px; height: 30px; background: #000; }
```
